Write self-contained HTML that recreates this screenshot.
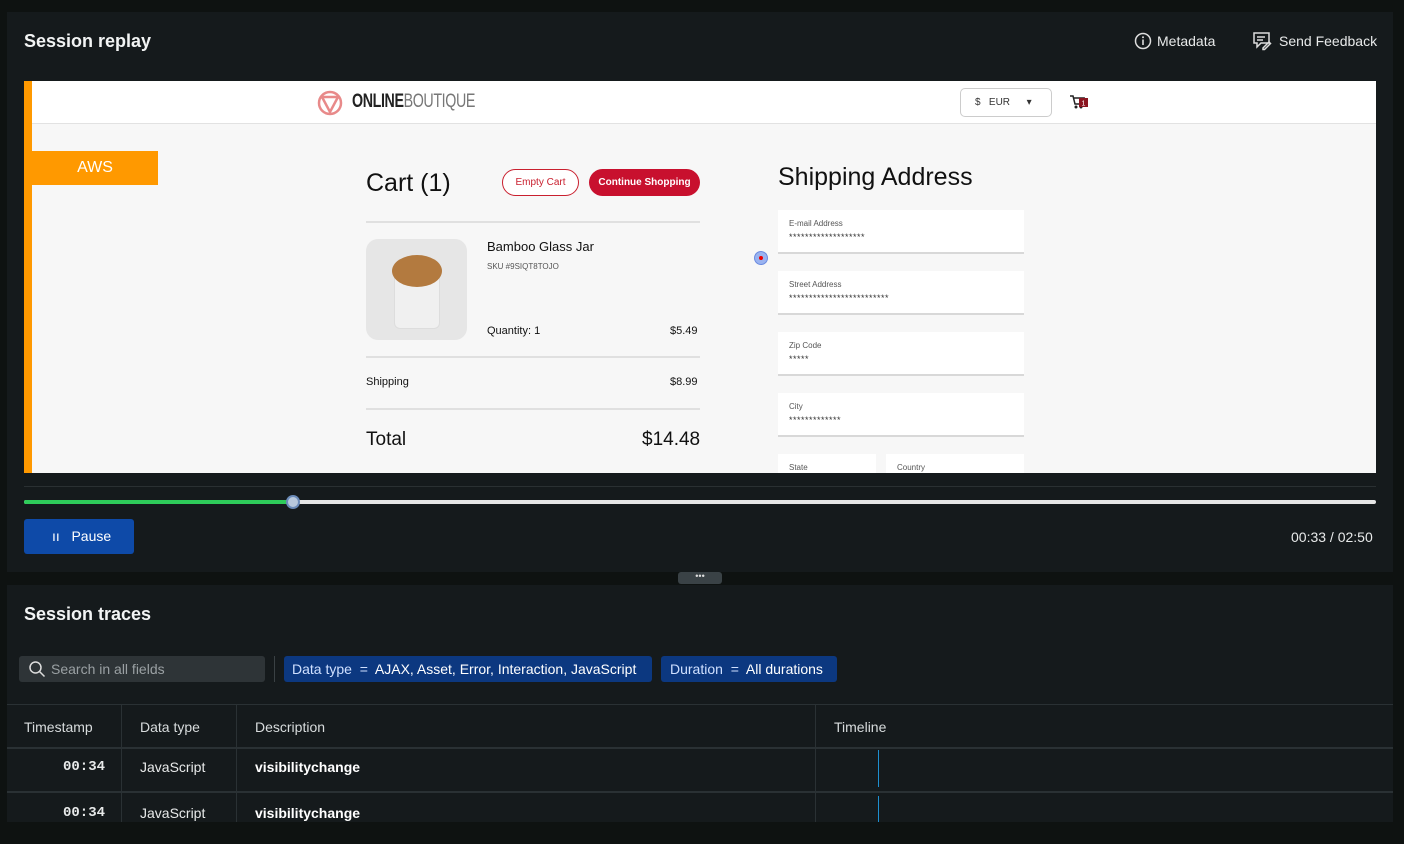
<!DOCTYPE html>
<html><head><meta charset="utf-8"><style>
*{box-sizing:border-box;margin:0;padding:0}
body{width:1404px;height:844px;background:#0e1211;font-family:"Liberation Sans",sans-serif;color:#e8eaea;position:relative;overflow:hidden}
.abs{position:absolute}
.panel{background:#151a1c}
.frame{left:24px;top:81px;width:1352px;height:392px;background:#f7f7f7;overflow:hidden}
.hdr{left:0;top:0;width:1352px;height:43px;background:#fff;border-bottom:1px solid #e2e2e2}
.fld{background:#fff;border-bottom:2px solid #d8d8d8;width:246px;height:44px}
.fld .l{position:absolute;left:11px;top:9px;font-size:8px;color:#555}
.fld .v{position:absolute;left:11px;top:22px;font-size:9px;color:#333;letter-spacing:0.5px}
.hr{height:2px;background:#e0e0e0;width:334px}
</style></head><body>
<div class="abs panel" style="left:7px;top:12px;width:1386px;height:560px"></div>
<div class="abs" style="left:24px;top:31px;font-size:18px;font-weight:bold;color:#f2f4f4">Session replay</div>
<svg class="abs" style="left:1134px;top:32px" width="18" height="18" viewBox="0 0 18 18"><circle cx="9" cy="9" r="7.5" fill="none" stroke="#ddd" stroke-width="1.5"/><rect x="8.2" y="7.5" width="1.6" height="5.5" fill="#ddd"/><circle cx="9" cy="5.2" r="1" fill="#ddd"/></svg>
<div class="abs" style="left:1157px;top:33px;font-size:14px;color:#e8eaea">Metadata</div>
<svg class="abs" style="left:1252px;top:31px" width="20" height="20" viewBox="0 0 20 20" fill="none" stroke="#ddd" stroke-width="1.5"><path d="M2 2h15v10H9l-4 4v-4H2z"/><path d="M5 6h8M5 9h6"/><path d="M11 17l6-6 1.5 1.5-6 6H11z"/></svg>
<div class="abs" style="left:1279px;top:33px;font-size:14px;color:#e8eaea">Send Feedback</div>

<div class="abs frame">
 <div class="abs" style="left:0;top:0;width:8px;height:392px;background:#ff9900"></div>
 <div class="abs hdr" style="left:8px"></div>
 <svg class="abs" style="left:293px;top:9px" width="26" height="26" viewBox="0 0 26 26" fill="none" stroke="#e88a8a" stroke-width="2.5"><circle cx="13" cy="13" r="11"/><path d="M5 7h16L13 22z"/></svg>
 <div class="abs" style="left:328px;top:10px;font-size:19px;color:#222;letter-spacing:-0.5px;transform:scaleX(0.75);transform-origin:0 0;white-space:nowrap"><b>ONLINE</b><span style="font-weight:normal;color:#777">BOUTIQUE</span></div>
 <div class="abs" style="left:936px;top:7px;width:92px;height:29px;border:1px solid #ccc;border-radius:5px;background:#fff;font-size:10px;color:#333;padding:8px 0 0 14px">$&nbsp;&nbsp;&nbsp;EUR&nbsp;&nbsp;&nbsp;&nbsp;&nbsp;&nbsp;▾</div>
 <svg class="abs" style="left:1045px;top:13px" width="20" height="16" viewBox="0 0 20 16"><path d="M1 2h3l2 8h7l2-6H5" fill="none" stroke="#222" stroke-width="1.5"/><circle cx="7" cy="13" r="1.5" fill="#222"/><circle cx="12" cy="13" r="1.5" fill="#222"/><rect x="10" y="4" width="9" height="9" fill="#8a1520"/><text x="12.5" y="11.5" font-size="7" fill="#fff" font-family="Liberation Sans">1</text></svg>
 <div class="abs" style="left:8px;top:70px;width:126px;height:34px;background:#ff9900;color:#fff;font-size:16px;text-align:center;line-height:34px">AWS</div>

 <div class="abs" style="left:342px;top:88px;font-size:25px;color:#111">Cart (1)</div>
 <div class="abs" style="left:478px;top:88px;width:77px;height:27px;border:1px solid #c9202f;border-radius:14px;font-size:10px;color:#c9202f;text-align:center;line-height:25px;background:#fff">Empty Cart</div>
 <div class="abs" style="left:565px;top:88px;width:111px;height:27px;border-radius:14px;font-size:10px;color:#fff;text-align:center;line-height:27px;background:#c8102e;font-weight:bold">Continue Shopping</div>
 <div class="abs hr" style="left:342px;top:140px"></div>
 <div class="abs" style="left:342px;top:158px;width:101px;height:101px;border-radius:12px;background:#e6e6e6"><div style="position:absolute;left:28px;top:34px;width:46px;height:56px;border-radius:6px;background:#f0f0f0;border:1px solid #ddd"></div><div style="position:absolute;left:26px;top:16px;width:50px;height:32px;border-radius:50%;background:#b37a3f"></div></div>
 <div class="abs" style="left:463px;top:158px;font-size:13px;color:#111">Bamboo Glass Jar</div>
 <div class="abs" style="left:463px;top:181px;font-size:8px;color:#555">SKU #9SIQT8TOJO</div>
 <div class="abs" style="left:463px;top:244px;font-size:11px;color:#111">Quantity: 1</div>
 <div class="abs" style="left:646px;top:244px;font-size:11px;color:#111">$5.49</div>
 <div class="abs hr" style="left:342px;top:275px"></div>
 <div class="abs" style="left:342px;top:295px;font-size:11px;color:#111">Shipping</div>
 <div class="abs" style="left:646px;top:295px;font-size:11px;color:#111">$8.99</div>
 <div class="abs hr" style="left:342px;top:327px"></div>
 <div class="abs" style="left:342px;top:348px;font-size:19px;color:#111">Total</div>
 <div class="abs" style="left:618px;top:348px;font-size:19px;color:#111">$14.48</div>

 <div class="abs" style="left:754px;top:82px;font-size:25px;color:#111">Shipping Address</div>
 <div class="abs fld" style="left:754px;top:129px"><span class="l">E-mail Address</span><span class="v">*******************</span></div>
 <div class="abs fld" style="left:754px;top:190px"><span class="l">Street Address</span><span class="v">*************************</span></div>
 <div class="abs fld" style="left:754px;top:251px"><span class="l">Zip Code</span><span class="v">*****</span></div>
 <div class="abs fld" style="left:754px;top:312px"><span class="l">City</span><span class="v">*************</span></div>
 <div class="abs fld" style="left:754px;top:373px;width:98px"><span class="l">State</span></div>
 <div class="abs fld" style="left:862px;top:373px;width:138px"><span class="l">Country</span></div>
 <div class="abs" style="left:730px;top:170px;width:14px;height:14px;border-radius:50%;background:#9ab3f0;border:1px solid #6b8be0"></div>
 <div class="abs" style="left:735px;top:175px;width:4px;height:4px;border-radius:50%;background:#e00"></div>
</div>

<div class="abs" style="left:24px;top:486px;width:1352px;height:1px;background:#2a3032"></div>
<div class="abs" style="left:24px;top:500px;width:1352px;height:4px;background:#e6e6e6;border-radius:2px"></div>
<div class="abs" style="left:24px;top:500px;width:270px;height:4px;background:#2ecc5a;border-radius:2px"></div>
<div class="abs" style="left:286px;top:495px;width:14px;height:14px;border-radius:50%;background:#b8c8dc;border:2px solid #6a8ab8"></div>
<div class="abs" style="left:24px;top:519px;width:110px;height:35px;background:#0e4aa8;border-radius:3px;font-size:14px;color:#fff;line-height:35px;padding-left:28px">ıı&nbsp;&nbsp;&nbsp;Pause</div>
<div class="abs" style="left:1291px;top:529px;font-size:14px;color:#e8eaea">00:33 / 02:50</div>

<div class="abs" style="left:678px;top:572px;width:44px;height:12px;background:#3a4246;border-radius:3px;font-size:9px;color:#ddd;text-align:center;line-height:9px">•••</div>

<div class="abs panel" style="left:7px;top:585px;width:1386px;height:237px"></div>
<div class="abs" style="left:24px;top:604px;font-size:18px;font-weight:bold;color:#f2f4f4">Session traces</div>
<div class="abs" style="left:19px;top:656px;width:246px;height:26px;background:#2e3437;border-radius:3px"></div>
<svg class="abs" style="left:28px;top:660px" width="18" height="18" viewBox="0 0 18 18" fill="none" stroke="#ddd" stroke-width="1.5"><circle cx="7.5" cy="7.5" r="5.5"/><path d="M11.5 11.5l5 5"/></svg>
<div class="abs" style="left:51px;top:661px;font-size:14px;color:#9aa0a3">Search in all fields</div>
<div class="abs" style="left:274px;top:656px;width:1px;height:26px;background:#3a4144"></div>
<div class="abs" style="left:284px;top:656px;width:368px;height:26px;background:#0c3880;border-radius:3px;font-size:14px;color:#cfe0ff;line-height:26px;padding-left:8px;white-space:nowrap">Data type &nbsp;=&nbsp; <span style="color:#fff">AJAX, Asset, Error, Interaction, JavaScript</span></div>
<div class="abs" style="left:661px;top:656px;width:176px;height:26px;background:#0c3880;border-radius:3px;font-size:14px;color:#cfe0ff;line-height:26px;padding-left:9px;white-space:nowrap">Duration &nbsp;=&nbsp; <span style="color:#fff">All durations</span></div>

<div class="abs" style="left:7px;top:704px;width:1386px;height:1px;background:#2a3134"></div>
<div class="abs" style="left:7px;top:747px;width:1386px;height:2px;background:#2a3134"></div>
<div class="abs" style="left:7px;top:791px;width:1386px;height:2px;background:#2a3134"></div>
<div class="abs" style="left:121px;top:704px;width:1px;height:118px;background:#2a3134"></div>
<div class="abs" style="left:236px;top:704px;width:1px;height:118px;background:#2a3134"></div>
<div class="abs" style="left:815px;top:704px;width:1px;height:118px;background:#2a3134"></div>
<div class="abs" style="left:24px;top:719px;font-size:14px;color:#d8dcdd">Timestamp</div>
<div class="abs" style="left:140px;top:719px;font-size:14px;color:#d8dcdd">Data type</div>
<div class="abs" style="left:255px;top:719px;font-size:14px;color:#d8dcdd">Description</div>
<div class="abs" style="left:834px;top:719px;font-size:14px;color:#d8dcdd">Timeline</div>
<div class="abs" style="left:63px;top:759px;font-size:14px;font-family:'Liberation Mono',monospace;font-weight:bold;color:#e8eaea">00:34</div>
<div class="abs" style="left:140px;top:759px;font-size:14px;color:#e8eaea">JavaScript</div>
<div class="abs" style="left:255px;top:759px;font-size:14px;font-weight:bold;color:#fff">visibilitychange</div>
<div class="abs" style="left:878px;top:750px;width:1px;height:37px;background:#1e90d0"></div>
<div class="abs" style="left:63px;top:805px;font-size:14px;font-family:'Liberation Mono',monospace;font-weight:bold;color:#e8eaea">00:34</div>
<div class="abs" style="left:140px;top:805px;font-size:14px;color:#e8eaea">JavaScript</div>
<div class="abs" style="left:255px;top:805px;font-size:14px;font-weight:bold;color:#fff">visibilitychange</div>
<div class="abs" style="left:878px;top:796px;width:1px;height:26px;background:#1e90d0"></div>
<div class="abs" style="left:0;top:822px;width:1404px;height:22px;background:#0e1211"></div>
</body></html>
